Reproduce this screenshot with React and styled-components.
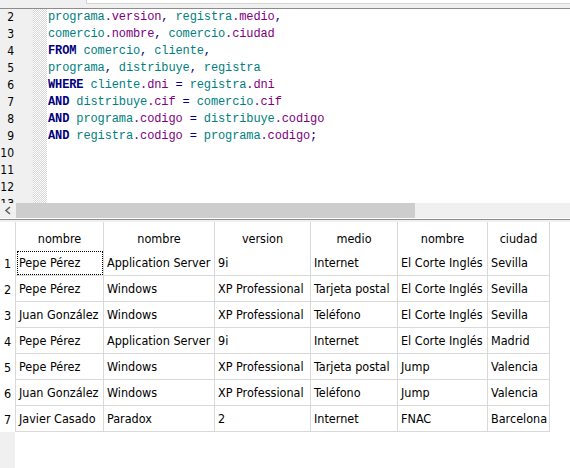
import React from 'react';
import styled, { createGlobalStyle } from 'styled-components';

const GlobalStyle = createGlobalStyle`
  html, body {
    margin: 0;
    padding: 0;
    background: #ffffff;
    overflow: hidden;
  }
`;

const uiFont = `"DejaVu Sans Condensed", "DejaVu Sans", sans-serif`;

const Window = styled.div`
  width: 570px;
  height: 468px;
  display: flex;
  flex-direction: column;
  background: #ffffff;
  font-family: ${uiFont};
  font-stretch: condensed;
  font-size: 12.5px;
  color: #000;
`;

const TopBar = styled.div`
  height: 9px;
  background: #f0f0f0;
  border-bottom: 1px solid #8c8c8c;
  box-sizing: border-box;
`;

const TopField = styled.div`
  margin-left: 86px;
  height: 4px;
  background: #ffffff;
  border-left: 1px solid #d4d4d4;
  border-bottom: 1px solid #d4d4d4;
  box-sizing: border-box;
`;

/* editor */
const Editor = styled.div`
  height: 194px;
  display: flex;
  overflow: hidden;
`;

const Gutter = styled.div`
  width: 33px;
  background: #f0f0f0;
  box-sizing: border-box;
  padding-right: 19px;
  text-align: right;
  font-size: 12px;
`;

const FoldMargin = styled.div`
  width: 14px;
  background: repeating-conic-gradient(#d6d6d6 0 25%, #ffffff 0 50%) 0 0 / 2px 2px;
`;

const CodeArea = styled.div`
  flex: 1;
  padding-left: 1px;
  font-family: "Liberation Mono", "Courier New", monospace;
  font-size: 12px;
  letter-spacing: -0.12px;
  white-space: pre;
`;

const Line = styled.div`
  height: 17px;
  line-height: 17px;
`;

const NumLine = styled(Line)``;

const tokenColors = {
  id: '#008080',
  prop: '#800080',
  kw: '#000080',
  op: '#000080',
};

const Tok = styled.span`
  color: ${(p) => tokenColors[p.$kind]};
  font-weight: ${(p) => (p.$kind === 'kw' ? 'bold' : 'normal')};
`;

/* scrollbar */
const HScroll = styled.div`
  height: 15px;
  display: flex;
  background: #f0f0f0;
`;

const ArrowButton = styled.div`
  width: 16px;
  display: flex;
  align-items: center;
  justify-content: center;
`;

const Thumb = styled.div`
  width: 399px;
  background: #cdcdcd;
`;

const Splitter = styled.div`
  height: 4px;
  box-sizing: border-box;
  border-top: 1px solid #ffffff;
  border-bottom: 2px solid #f0f0f0;
  background: #8c8c8c;
`;

/* result grid */
const GridPane = styled.div`
  flex: 1;
  display: flex;
  flex-direction: column;
`;

const Grid = styled.div`
  display: grid;
  grid-template-columns: 16px 88px 111px 96px 87px 90px 62px;
  grid-template-rows: 28px;
  grid-auto-rows: 26px;
  width: 550px;
`;

const Cell = styled.div`
  box-sizing: border-box;
  border-right: 1px solid #d9d9d9;
  border-bottom: 1px solid #d9d9d9;
  padding-left: 3px;
  display: flex;
  align-items: center;
  white-space: nowrap;
  overflow: hidden;
  ${(p) => p.$focus && `
    outline: 1px dotted #000;
    outline-offset: -2px;
  `}
`;

const HeaderCell = styled.div`
  box-sizing: border-box;
  border-right: 1px solid #d9d9d9;
  display: flex;
  align-items: center;
  justify-content: center;
  padding-top: 5px;
  white-space: nowrap;
`;

const RowNum = styled.div`
  box-sizing: border-box;
  border-right: 1px solid #d9d9d9;
  display: flex;
  align-items: center;
  justify-content: center;
`;

const Filler = styled.div`
  flex: 1;
  display: flex;
`;

const FillerGutter = styled.div`
  width: 15px;
  background: #f0f0f0;
`;

const code = [
  [['id', 'programa'], ['prop', '.version'], ['op', ', '], ['id', 'registra'], ['prop', '.medio'], ['op', ',']],
  [['id', 'comercio'], ['prop', '.nombre'], ['op', ', '], ['id', 'comercio'], ['prop', '.ciudad']],
  [['kw', 'FROM'], ['op', ' '], ['id', 'comercio'], ['op', ', '], ['id', 'cliente'], ['op', ',']],
  [['id', 'programa'], ['op', ', '], ['id', 'distribuye'], ['op', ', '], ['id', 'registra']],
  [['kw', 'WHERE'], ['op', ' '], ['id', 'cliente'], ['prop', '.dni'], ['op', ' = '], ['id', 'registra'], ['prop', '.dni']],
  [['kw', 'AND'], ['op', ' '], ['id', 'distribuye'], ['prop', '.cif'], ['op', ' = '], ['id', 'comercio'], ['prop', '.cif']],
  [['kw', 'AND'], ['op', ' '], ['id', 'programa'], ['prop', '.codigo'], ['op', ' = '], ['id', 'distribuye'], ['prop', '.codigo']],
  [['kw', 'AND'], ['op', ' '], ['id', 'registra'], ['prop', '.codigo'], ['op', ' = '], ['id', 'programa'], ['prop', '.codigo'], ['op', ';']],
  [],
  [],
  [],
  [],
];

const headers = ['nombre', 'nombre', 'version', 'medio', 'nombre', 'ciudad'];

const rows = [
  ['Pepe Pérez', 'Application Server', '9i', 'Internet', 'El Corte Inglés', 'Sevilla'],
  ['Pepe Pérez', 'Windows', 'XP Professional', 'Tarjeta postal', 'El Corte Inglés', 'Sevilla'],
  ['Juan González', 'Windows', 'XP Professional', 'Teléfono', 'El Corte Inglés', 'Sevilla'],
  ['Pepe Pérez', 'Application Server', '9i', 'Internet', 'El Corte Inglés', 'Madrid'],
  ['Pepe Pérez', 'Windows', 'XP Professional', 'Tarjeta postal', 'Jump', 'Valencia'],
  ['Juan González', 'Windows', 'XP Professional', 'Teléfono', 'Jump', 'Valencia'],
  ['Javier Casado', 'Paradox', '2', 'Internet', 'FNAC', 'Barcelona'],
];

const App = () => {
  return (
    <Window>
      <GlobalStyle />
      <TopBar>
        <TopField />
      </TopBar>

      <Editor>
        <Gutter>
          {code.map((_, i) => (
            <NumLine key={i}>{i + 2}</NumLine>
          ))}
        </Gutter>
        <FoldMargin />
        <CodeArea>
          {code.map((line, i) => (
            <Line key={i}>
              {line.map(([kind, text], j) => (
                <Tok key={j} $kind={kind}>{text}</Tok>
              ))}
            </Line>
          ))}
        </CodeArea>
      </Editor>

      <HScroll>
        <ArrowButton>
          <svg width="8" height="9" viewBox="0 0 8 9">
            <polyline points="6,1 2,4.5 6,8" fill="none" stroke="#606060" strokeWidth="1.6" />
          </svg>
        </ArrowButton>
        <Thumb />
      </HScroll>
      <Splitter />

      <GridPane>
        <Grid>
          <RowNum />
          {headers.map((h, i) => (
            <HeaderCell key={i}>{h}</HeaderCell>
          ))}
          {rows.map((row, r) => (
            <React.Fragment key={r}>
              <RowNum>{r + 1}</RowNum>
              {row.map((val, c) => (
                <Cell key={c} $focus={r === 0 && c === 0}>{val}</Cell>
              ))}
            </React.Fragment>
          ))}
        </Grid>
        <Filler>
          <FillerGutter />
        </Filler>
      </GridPane>
    </Window>
  );
};

export default App;
